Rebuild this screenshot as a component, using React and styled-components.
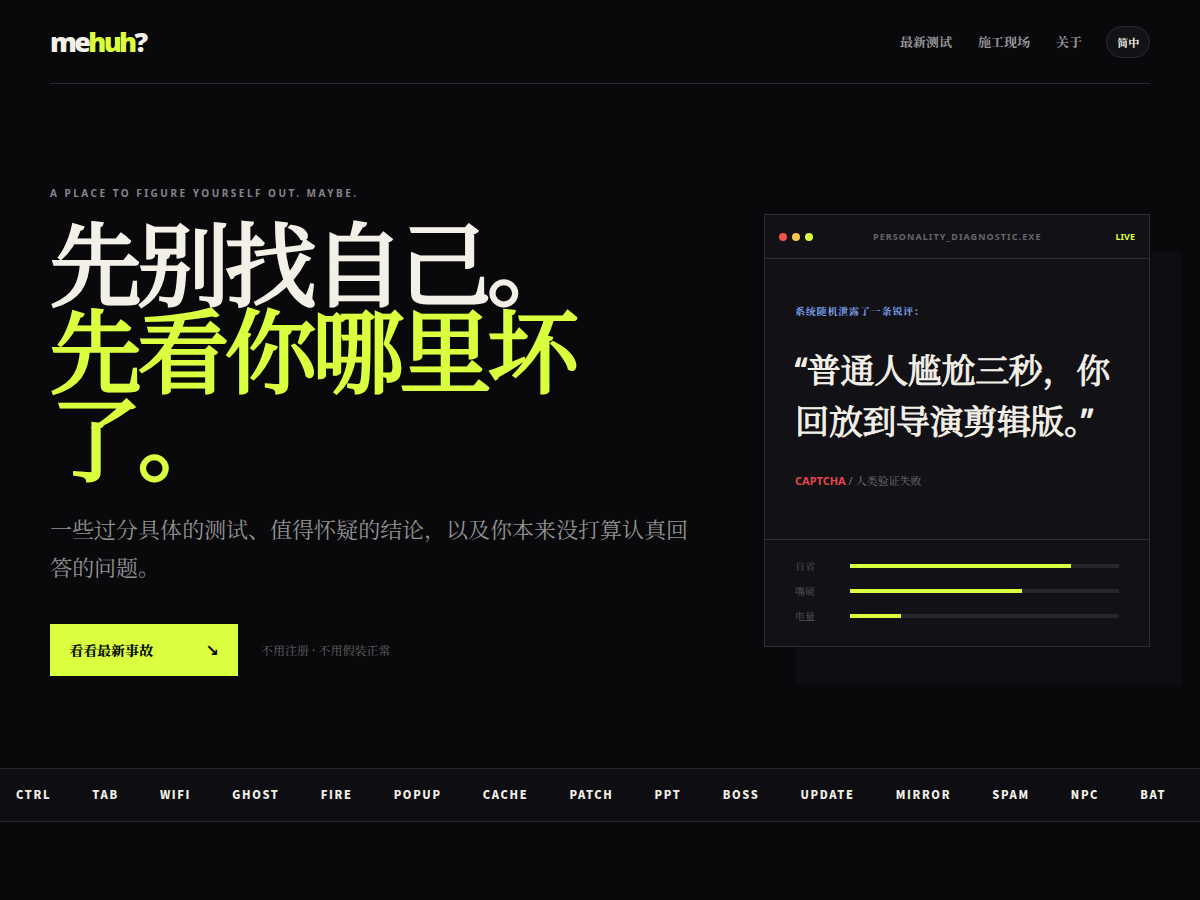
import React from 'react';
import styled, { createGlobalStyle } from 'styled-components';

const lime = '#d9ff3f';
const paper = '#f3f0e8';
const line = '#2d2d33';
const stack = '"Noto Sans", "Noto Serif SC", serif';
const condensed = '"Noto Sans CJK SC", sans-serif';

const GlobalStyle = createGlobalStyle`
  html, body {
    margin: 0;
    padding: 0;
    background: #09090c;
    overflow: hidden;
  }
  * { box-sizing: border-box; }
`;

const Page = styled.div`
  width: 1200px;
  height: 900px;
  background: #09090c;
  color: ${paper};
  font-family: ${stack};
  overflow: hidden;
  opacity: 0.999;
`;

const Nav = styled.header`
  margin: 0 50px;
  height: 84px;
  border-bottom: 1px solid #2a2a30;
  display: flex;
  justify-content: space-between;
  align-items: center;
`;

const Logo = styled.div`
  font-size: 27px;
  font-weight: 900;
  letter-spacing: -0.1em;
  & span { color: ${lime}; }
`;

const Menu = styled.nav`
  display: flex;
  align-items: center;
  gap: 24px;
`;

const MenuLinks = styled.div`
  display: flex;
  gap: 26px;
`;

const MenuItem = styled.a`
  font-size: 13px;
  font-weight: 700;
  color: #9a9a9e;
`;

const LangButton = styled.button`
  width: 44px;
  height: 32px;
  padding: 0;
  border: 1px solid #2a2a30;
  border-radius: 16px;
  background: #121217;
  color: ${paper};
  font-family: ${stack};
  font-size: 11px;
  font-weight: 700;
`;

const Hero = styled.section`
  height: 684px;
  padding: 0 50px;
  display: flex;
  justify-content: space-between;
  align-items: flex-start;
`;

const Left = styled.div`
  width: 650px;
  padding-top: 102px;
`;

const Eyebrow = styled.div`
  font-size: 10px;
  line-height: 14px;
  font-weight: 700;
  letter-spacing: 0.25em;
  color: #85858a;
`;

const Title = styled.h1`
  margin: 20px 0 0;
  width: 560px;
  font-size: 92px;
  font-weight: 400;
  line-height: 87.4px;
  letter-spacing: -0.05em;
  -webkit-text-stroke: 3px currentColor;
`;

const TitleAccent = styled.span`
  display: block;
  color: ${lime};
`;

const Lead = styled.p`
  margin: 28px 0 0;
  width: 650px;
  font-size: 22px;
  line-height: 38px;
  color: #929292;
`;

const Actions = styled.div`
  margin-top: 38px;
  display: flex;
  align-items: center;
  gap: 23px;
`;

const Cta = styled.a`
  width: 188px;
  height: 52px;
  padding: 0 19px;
  background: ${lime};
  color: #07070a;
  display: flex;
  justify-content: space-between;
  align-items: center;
  font-size: 14px;
  font-weight: 800;
`;

const Arrow = styled.span`
  font-family: "DejaVu Sans", sans-serif;
  font-size: 16px;
  font-weight: 700;
`;

const Note = styled.span`
  font-size: 12px;
  color: #666;
`;

const Card = styled.aside`
  width: 386px;
  margin-top: 130px;
  background: #111116;
  border: 1px solid ${line};
  box-shadow: 32px 38px 0 #0d0e11;
`;

const CardBar = styled.div`
  height: 44px;
  padding: 0 14px;
  border-bottom: 1px solid ${line};
  display: flex;
  justify-content: space-between;
  align-items: center;
`;

const Dots = styled.div`
  display: flex;
  gap: 5px;
`;

const Dot = styled.i`
  width: 8px;
  height: 8px;
  border-radius: 50%;
  background: ${p => p.$color};
`;

const CardTitle = styled.span`
  margin-right: 14px;
  font-size: 9px;
  font-weight: 700;
  letter-spacing: 0.12em;
  color: #66666b;
`;

const Live = styled.span`
  font-size: 9px;
  font-weight: 700;
  color: ${lime};
`;

const CardBody = styled.div`
  height: 281px;
  padding: 44px 30px 0;
  border-bottom: 1px solid ${line};
`;

const Kicker = styled.div`
  font-size: 10px;
  line-height: 16px;
  font-weight: 700;
  letter-spacing: 0.08em;
  color: #7ea6f4;
`;

const Quote = styled.blockquote`
  margin: 26px 0 0;
  font-size: 34px;
  line-height: 51px;
  font-weight: 400;
  letter-spacing: -0.01em;
  -webkit-text-stroke: 1px currentColor;
  color: ${paper};
`;

const Source = styled.div`
  margin-top: 26px;
  font-size: 11px;
  line-height: 16px;
  color: #77777c;
`;

const SourceTag = styled.b`
  color: #e5484d;
`;

const Meters = styled.div`
  padding: 17px 30px 21px;
  display: flex;
  flex-direction: column;
  gap: 7px;
`;

const Meter = styled.div`
  height: 18px;
  display: flex;
  align-items: center;
`;

const MeterLabel = styled.span`
  width: 55px;
  padding-bottom: 2px;
  font-size: 10px;
  color: #55555a;
`;

const Track = styled.div`
  flex: 1;
  height: 4px;
  background: #26262b;
`;

const Fill = styled.div`
  height: 100%;
  background: ${lime};
`;

const Ticker = styled.div`
  height: 54px;
  background: #0e0e12;
  border-top: 1px solid #26262b;
  border-bottom: 1px solid #26262b;
  padding: 0 0 3px 16px;
  display: flex;
  align-items: center;
  gap: 41.15px;
  white-space: nowrap;
  overflow: hidden;
`;

const Word = styled.span`
  font-family: ${condensed};
  font-size: 11px;
  font-weight: 800;
  letter-spacing: 0.15em;
  color: #f0eee6;
`;

const words = ['CTRL', 'TAB', 'WIFI', 'GHOST', 'FIRE', 'POPUP', 'CACHE', 'PATCH', 'PPT', 'BOSS', 'UPDATE', 'MIRROR', 'SPAM', 'NPC', 'BAT'];
const meters = [['自省', 82], ['嘴硬', 64], ['电量', 19]];

export default function App() {
  return (
    <Page lang="zh-CN">
      <GlobalStyle />
      <Nav>
        <Logo>me<span>huh</span>?</Logo>
        <Menu>
          <MenuLinks>
            <MenuItem>最新测试</MenuItem>
            <MenuItem>施工现场</MenuItem>
            <MenuItem>关于</MenuItem>
          </MenuLinks>
          <LangButton>简中</LangButton>
        </Menu>
      </Nav>
      <Hero>
        <Left>
          <Eyebrow>A PLACE TO FIGURE YOURSELF OUT. MAYBE.</Eyebrow>
          <Title>
            先别找自己。
            <TitleAccent>先看你哪里坏了。</TitleAccent>
          </Title>
          <Lead>一些过分具体的测试、值得怀疑的结论，以及你本来没打算认真回答的问题。</Lead>
          <Actions>
            <Cta>看看最新事故<Arrow>↘</Arrow></Cta>
            <Note>不用注册 · 不用假装正常</Note>
          </Actions>
        </Left>
        <Card>
          <CardBar>
            <Dots>
              <Dot $color="#f2504b" />
              <Dot $color="#f7c64f" />
              <Dot $color={lime} />
            </Dots>
            <CardTitle>PERSONALITY_DIAGNOSTIC.EXE</CardTitle>
            <Live>LIVE</Live>
          </CardBar>
          <CardBody>
            <Kicker>系统随机泄露了一条锐评：</Kicker>
            <Quote>“普通人尴尬三秒，你回放到导演剪辑版。”</Quote>
            <Source><SourceTag>CAPTCHA</SourceTag> / 人类验证失败</Source>
          </CardBody>
          <Meters>
            {meters.map(([label, value]) => (
              <Meter key={label}>
                <MeterLabel>{label}</MeterLabel>
                <Track><Fill style={{ width: `${value}%` }} /></Track>
              </Meter>
            ))}
          </Meters>
        </Card>
      </Hero>
      <Ticker>
        {words.map(w => <Word key={w}>{w}</Word>)}
      </Ticker>
    </Page>
  );
}
